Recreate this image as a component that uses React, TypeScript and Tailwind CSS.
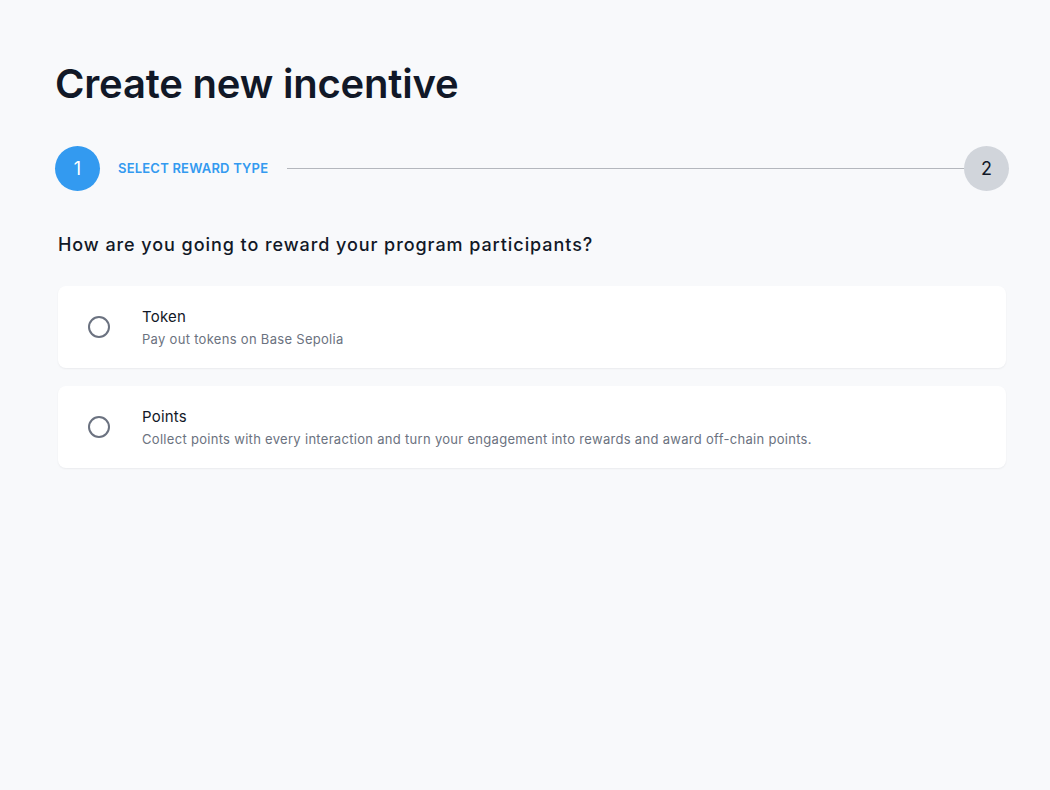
type Option = {
  title: string
  description: string
}

const options: Option[] = [
  { title: 'Token', description: 'Pay out tokens on Base Sepolia' },
  {
    title: 'Points',
    description:
      'Collect points with every interaction and turn your engagement into rewards and award off-chain points.',
  },
]

export default function App() {
  return (
    <div
      className="min-h-[790px] bg-[#f8f9fb] pl-[55px] pr-[41px] pt-[60px] text-[#111827]"
      style={{ fontFamily: 'Inter, "Noto Sans", sans-serif' }}
    >
      <h1 className="text-[40px] font-semibold leading-[48px] tracking-[-0.2px] text-[#111827]">
        Create new incentive
      </h1>

      <div className="mt-[38px] flex items-center">
        <div className="flex h-[45px] w-[45px] items-center justify-center rounded-full bg-[#339af0] text-[18px] text-white">
          1
        </div>
        <span className="ml-[18px] text-[13px] font-semibold tracking-[0.2px] text-[#339af0]">
          SELECT REWARD TYPE
        </span>
        <div className="ml-[19px] h-px flex-1 bg-[#b4b7bd]" />
        <div className="flex h-[45px] w-[45px] items-center justify-center rounded-full bg-[#d1d5db] text-[18px] text-[#111827]">
          2
        </div>
      </div>

      <div className="mx-[3px] mt-[40px]">
        <h2 className="text-[18px] font-medium leading-[28px] tracking-[0.93px] text-[#111827]">
          How are you going to reward your program participants?
        </h2>

        <div className="mt-[27px] flex flex-col gap-[18px]">
          {options.map((o) => (
            <label
              key={o.title}
              className="flex h-[82px] cursor-pointer items-center rounded-lg bg-white pl-[30px] shadow-[0_1px_2px_rgba(16,24,40,0.06)]"
            >
              <span className="h-[22px] w-[22px] shrink-0 rounded-full border-2 border-[#6b7280]" />
              <div className="ml-[32px] flex flex-col">
                <span className="text-[15px] leading-[22px] tracking-[0.2px] text-[#111827]">
                  {o.title}
                </span>
                <span className="mt-[2px] text-[13px] leading-[18px] tracking-[0.3px] text-[#6b7280]">
                  {o.description}
                </span>
              </div>
            </label>
          ))}
        </div>
      </div>
    </div>
  )
}
